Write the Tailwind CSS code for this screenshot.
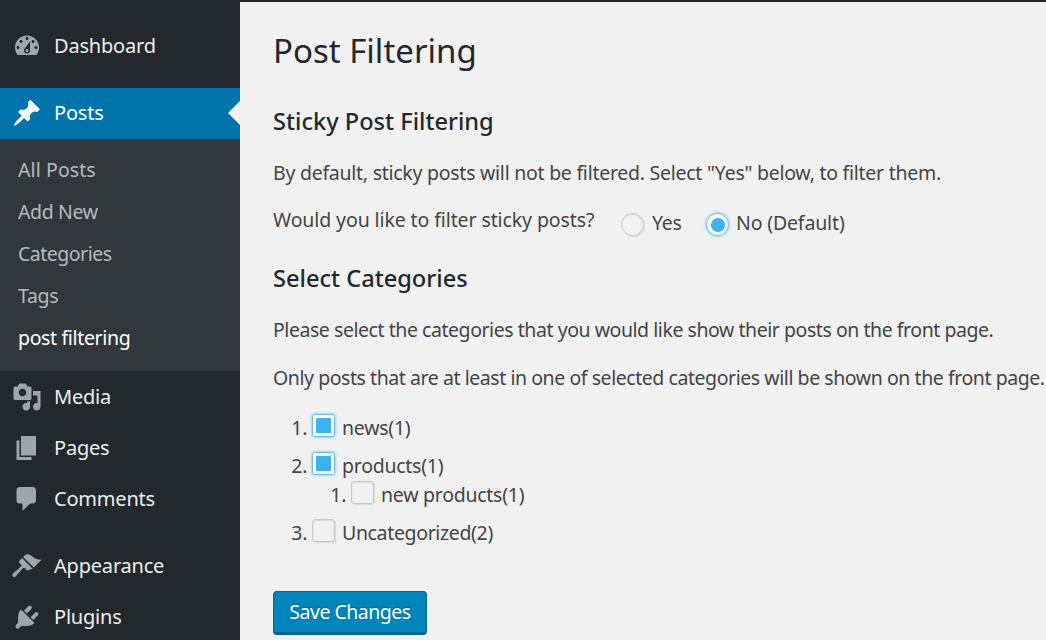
<!DOCTYPE html>
<html><head><meta charset="utf-8"><script src="https://cdn.jsdelivr.net/npm/@tailwindcss/browser@4"></script></head>
<body class="m-0 overflow-hidden">
<div class="flex w-[1046px] h-[640px] overflow-hidden bg-[#23282d] font-['Noto_Sans',sans-serif] text-[19.5px] tracking-[-0.26px] text-[#444]">
  <nav class="w-[240px] shrink-0 pt-[20px] text-[#eee] text-[20px] tracking-[-0.2px]">
    <a class="flex items-center h-[51px] pl-[12px] gap-[12px]"><svg class="w-[30px] h-[30px] fill-[#a0a5aa]" viewBox="0 0 20 20"><path fill-rule="evenodd" d="M3.76 16h12.48c1.1-1.37 1.76-3.11 1.76-5 0-4.42-3.58-8-8-8s-8 3.58-8 8c0 1.89.66 3.63 1.76 5zM10 4c.55 0 1 .45 1 1s-.45 1-1 1-1-.45-1-1 .45-1 1-1zM6 6c.55 0 1 .45 1 1s-.45 1-1 1-1-.45-1-1 .45-1 1-1zm8 0c.55 0 1 .45 1 1s-.45 1-1 1-1-.45-1-1 .45-1 1-1zm-5.37 5.55L12 7v6c0 1.1-.9 2-2 2s-2-.9-2-2c0-.57.24-1.08.63-1.45zM4 10c.55 0 1 .45 1 1s-.45 1-1 1-1-.45-1-1 .45-1 1-1zm12 0c.55 0 1 .45 1 1s-.45 1-1 1-1-.45-1-1 .45-1 1-1zm-5 3c0-.55-.45-1-1-1s-1 .45-1 1 .45 1 1 1 1-.45 1-1z"/></svg>Dashboard</a>
    <a class="relative flex items-center h-[51px] mt-[17px] pl-[12px] pb-[1px] gap-[12px] bg-[#0073aa] text-white"><svg class="w-[30px] h-[30px] fill-white" viewBox="0 0 20 20"><path d="M10.44 3.02l1.82-1.82 6.36 6.35-1.83 1.82c-1.05-.68-2.48-.57-3.41.36l-.75.75c-.92.93-1.04 2.35-.35 3.41l-1.83 1.82-2.41-2.41-2.8 2.79c-.42.42-3.38 2.71-3.8 2.29s1.86-3.39 2.28-3.81l2.79-2.79L4.1 9.36l1.83-1.82c1.05.69 2.48.57 3.4-.36l.75-.75c.93-.92 1.05-2.35.36-3.41z"/></svg>Posts<span class="absolute right-0 top-[13px] border-y-[12px] border-r-[12px] border-y-transparent border-r-[#f1f1f1]"></span></a>
    <ul class="bg-[#32373c] pt-[10px] pb-[12px] text-[#f0f5fa]/70 text-[19.5px] tracking-[-0.35px]">
      <li class="flex items-center h-[42px] pl-[18px] tracking-[0.1px]">All Posts</li>
      <li class="flex items-center h-[42px] pl-[18px]">Add New</li>
      <li class="flex items-center h-[42px] pl-[18px] tracking-[-0.5px]">Categories</li>
      <li class="flex items-center h-[42px] pl-[18px]">Tags</li>
      <li class="flex items-center h-[42px] pl-[18px] text-white">post filtering</li>
    </ul>
    <a class="flex items-center h-[51px] pl-[12px] gap-[12px]"><svg class="w-[30px] h-[30px] fill-[#a0a5aa]" viewBox="0 0 20 20"><path fill-rule="evenodd" d="M13 11V4c0-.55-.45-1-1-1h-1.67L9 1H5L3.67 3H2c-.55 0-1 .45-1 1v7c0 .55.45 1 1 1h10c.55 0 1-.45 1-1zM7 4.5c1.38 0 2.5 1.12 2.5 2.5S8.38 9.5 7 9.5 4.5 8.38 4.5 7 5.62 4.5 7 4.5zM14 6h5v10.5c0 1.38-1.12 2.5-2.5 2.5S14 17.88 14 16.5s1.12-2.5 2.5-2.5c.17 0 .34.02.5.05V9h-3V6zm-4 8.05V13h2v3.5c0 1.38-1.12 2.5-2.5 2.5S7 17.88 7 16.5 8.12 14 9.5 14c.17 0 .34.02.5.05z"/></svg>Media</a>
    <a class="flex items-center h-[51px] pl-[12px] gap-[12px]"><svg class="w-[30px] h-[30px] fill-[#a0a5aa]" viewBox="0 0 20 20"><path d="M6 15V2h10v13H6zm-1 1h8v2H3V5h2v11z"/></svg>Pages</a>
    <a class="flex items-center h-[51px] pl-[12px] gap-[12px]"><svg class="w-[30px] h-[30px] fill-[#a0a5aa]" viewBox="0 0 20 20"><path d="M5 2h9c1.1 0 2 .9 2 2v7c0 1.1-.9 2-2 2h-2l-5 5v-5H5c-1.1 0-2-.9-2-2V4c0-1.1.9-2 2-2z"/></svg>Comments</a>
    <a class="flex items-center h-[51px] mt-[16px] pl-[12px] gap-[12px]"><svg class="w-[30px] h-[30px] fill-[#a0a5aa]" viewBox="0 0 20 20"><path d="M14.48 11.06L7.41 3.99l1.5-1.5c.5-.56 2.3-.47 3.51.32 1.21.8 1.43 1.28 2.91 2.1 1.18.64 2.45 1.26 4.45.85zm-.71.71L6.7 4.7 4.93 6.47c-.39.39-.39 1.02 0 1.41l1.06 1.06c.39.39.39 1.03 0 1.42-.6.6-5.4 4.76-5.4 4.76-.51.51-.51 1.34 0 1.85.25.25.6.39.95.39.35 0 .67-.14.92-.39 0 0 4.16-4.79 4.76-5.4.37-.38 1.03-.39 1.42 0l1.06 1.06c.39.39 1.02.39 1.41 0z"/></svg>Appearance</a>
    <a class="flex items-center h-[51px] pl-[12px] gap-[12px]"><svg class="w-[30px] h-[30px] fill-[#a0a5aa]" viewBox="0 0 20 20"><path d="M13.11 4.36L9.87 7.6 8 5.73l3.24-3.24c.35-.34 1.05-.2 1.56.32.52.51.66 1.21.31 1.55zm-8 1.77l.91-1.12 9.01 9.01-1.19.84c-.71.71-2.63 1.16-3.82 1.16H6.14L4.9 17.26c-.59.59-1.54.59-2.12 0-.59-.58-.59-1.53 0-2.12l1.24-1.24v-3.88c0-1.13.4-3.19 1.09-3.89zm7.26 3.97l3.24-3.24c.34-.35 1.04-.21 1.55.31.52.51.66 1.21.31 1.55l-3.24 3.25z"/></svg>Plugins</a>
  </nav>
  <main class="flex-1 mt-[2px] bg-[#f1f1f1] pl-[33px] whitespace-nowrap">
    <h1 class="text-[33px] tracking-normal leading-[44px] pt-[27px] text-[#23282d]">Post Filtering</h1>
    <h2 class="mt-[33px] text-[23.6px] tracking-normal leading-[30px] font-medium text-[#23282d]">Sticky Post Filtering</h2>
    <p class="mt-[22px] leading-[30px]">By default, sticky posts will not be filtered. Select "Yes" below, to filter them.</p>
    <div class="mt-[18px] flex items-start h-[30px]">
      <span class="w-[348px] leading-[30px] -mt-[1px] tracking-[-0.1px]">Would you like to filter sticky posts?</span>
      <span class="mt-[7px] w-[23px] h-[23px] rounded-full border border-[#c5c9cd] bg-white/20 shadow-[inset_0_1px_2px_rgba(0,0,0,0.1),1px_1px_1px_rgba(0,0,0,0.1)]"></span>
      <span class="ml-[8px] w-[54px] mt-[2px] leading-[30px]">Yes</span>
      <span class="mt-[7px] w-[23px] h-[23px] rounded-full border border-[#6cbdec] bg-white/80 shadow-[0_0_3px_rgba(61,178,240,0.9)] flex items-center justify-center"><span class="w-[14px] h-[14px] rounded-full bg-[#3db2f0]"></span></span>
      <span class="ml-[7px] mt-[2px] leading-[30px] tracking-[-0.15px]">No (Default)</span>
    </div>
    <h2 class="mt-[27px] text-[23.6px] tracking-normal leading-[30px] font-medium text-[#23282d]">Select Categories</h2>
    <p class="mt-[22px] leading-[30px] tracking-[-0.45px]">Please select the categories that you would like show their posts on the front page.</p>
    <p class="mt-[18px] leading-[30px] tracking-[-0.44px]">Only posts that are at least in one of selected categories will be shown on the front page.</p>
    <ol class="mt-[20px] pl-[39px] list-decimal leading-[30px]">
      <li class="mb-[8px]"><span class="inline-flex items-start align-top"><span class="mt-[1px] w-[23px] h-[23px] rounded-[3px] border border-[#6cbdec] bg-white/80 shadow-[0_0_3px_rgba(61,178,240,0.9)] flex items-center justify-center"><span class="w-[15px] h-[15px] rounded-[1px] bg-[#3db2f0]"></span></span><span class="ml-[7px]">news(1)</span></span></li>
      <li class="mb-[8px]"><span class="inline-flex items-start align-top"><span class="mt-[1px] w-[23px] h-[23px] rounded-[3px] border border-[#6cbdec] bg-white/80 shadow-[0_0_3px_rgba(61,178,240,0.9)] flex items-center justify-center"><span class="w-[15px] h-[15px] rounded-[1px] bg-[#3db2f0]"></span></span><span class="ml-[7px]">products(1)</span></span>
        <ol class="-mt-[1px] pl-[39px] list-decimal"><li><span class="inline-flex items-start align-top"><span class="mt-[1px] w-[23px] h-[23px] rounded-[3px] border border-[#c5c9cd] shadow-[inset_0_1px_2px_rgba(0,0,0,0.1),1px_1px_1px_rgba(0,0,0,0.1)]"></span><span class="ml-[7px]">new products(1)</span></span></li></ol>
      </li>
      <li><span class="inline-flex items-start align-top"><span class="mt-[1px] w-[23px] h-[23px] rounded-[3px] border border-[#c5c9cd] shadow-[inset_0_1px_2px_rgba(0,0,0,0.1),1px_1px_1px_rgba(0,0,0,0.1)]"></span><span class="ml-[7px] tracking-[-0.35px]">Uncategorized(2)</span></span></li>
    </ol>
    <button class="mt-[43px] block w-[154px] h-[44px] rounded-[4px] bg-[#0085ba] border border-[#006799] border-b-[3px] text-white text-[19.5px] tracking-[-0.5px] [text-shadow:0_-1px_1px_#006799]">Save Changes</button>
  </main>
</div>
</body></html>
